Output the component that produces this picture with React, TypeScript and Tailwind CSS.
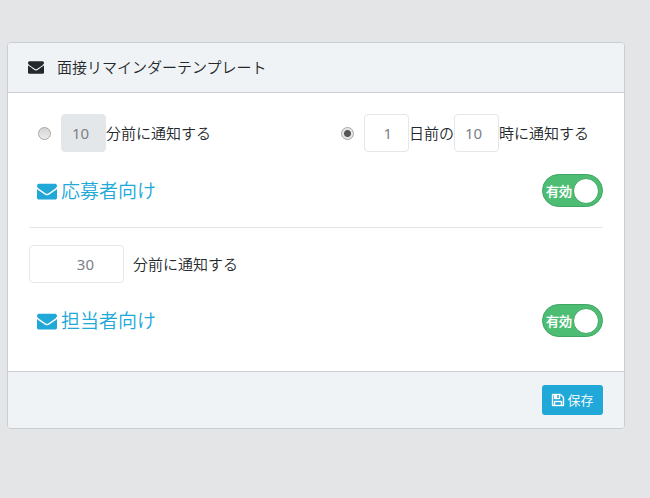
import { useState } from 'react';

function EnvelopeIcon({ className }: { className: string }) {
  return (
    <svg className={className} viewBox="0 0 1792 1792" fill="currentColor" aria-hidden="true">
      <path d="M1792 710v794q0 66-47 113t-113 47h-1472q-66 0-113-47t-47-113v-794q44 49 101 87 362 246 497 345 57 42 92.5 65.5t94.5 48 110 24.5h2q51 0 110-24.5t94.5-48 92.5-65.5q170-123 498-345 57-39 100-87zm0-294q0 79-49 151t-122 123q-376 261-468 325-10 7-42.5 31t-54 38.5-52 32.5-57.5 27-50 9h-2q-23 0-50-9t-57.5-27-52-32.5-54-38.5-42.5-31q-91-64-262-182.5t-205-142.5q-62-42-117-115.5t-55-136.5q0-78 41.5-130t118.5-52h1472q65 0 112.5 47t47.5 113z" />
    </svg>
  );
}

function SaveIcon() {
  return (
    <svg
      className="size-[14px]"
      viewBox="0 0 1792 1792"
      fill="currentColor"
      stroke="currentColor"
      strokeWidth={50}
      aria-hidden="true"
    >
      <path d="M512 1536h768v-384h-768v384zm896 0h128v-896q0-14-10-38.5t-20-34.5l-281-281q-10-10-34-20t-39-10v416q0 40-28 68t-68 28h-576q-40 0-68-28t-28-68v-416h-128v1280h128v-416q0-40 28-68t68-28h832q40 0 68 28t28 68v416zm-384-928v-320q0-13-9.5-22.5t-22.5-9.5h-192q-13 0-22.5 9.5t-9.5 22.5v320q0 13 9.5 22.5t22.5 9.5h192q13 0 22.5-9.5t9.5-22.5zm640 32v928q0 40-28 68t-68 28h-1344q-40 0-68-28t-28-68v-1344q0-40 28-68t68-28h928q40 0 88 20t76 48l280 280q28 28 48 76t20 88z" />
    </svg>
  );
}

const radioClass =
  'size-[13px] shrink-0 appearance-none rounded-full border border-[#a6a6a6] bg-[linear-gradient(#d4d4d4,#ececec)] checked:bg-[radial-gradient(circle,#555_3px,#e6e6e6_4px)]';
const inputClass =
  'h-[38px] rounded border border-[#e4e7ea] bg-white font-normal text-[#7b8085] outline-none disabled:bg-[#e4e7ea]';

function TemplateRow({ label }: { label: string }) {
  const [enabled, setEnabled] = useState(true);

  return (
    <div className="flex items-center justify-between pl-2">
      <a href="#" className="flex items-center gap-1 text-[19px] leading-6 text-[#20a8d8]">
        <EnvelopeIcon className="size-5" />
        {label}
      </a>
      <label className="flex h-[33px] w-[61px] items-center justify-between rounded-full border border-[#3ea662] bg-[#4dbd74] px-[3px] text-[13px] font-bold text-white">
        <input
          type="checkbox"
          className="sr-only"
          checked={enabled}
          onChange={(e) => setEnabled(e.target.checked)}
          aria-label={label}
        />
        <span>有効</span>
        <span className="size-[26px] rounded-full border border-[#3ea662] bg-white" />
      </label>
    </div>
  );
}

export default function App() {
  const [timing, setTiming] = useState('day');

  return (
    <div className="min-h-screen bg-[#e4e5e6] pt-[42px] pr-[25px] pl-[7px] font-['Noto_Sans','Noto_Sans_CJK_JP_DemiLight','Noto_Sans_CJK_JP',sans-serif] text-[15px] leading-[22px] font-[350] text-[#23282c]">
      <form
        className="overflow-hidden rounded border border-[#c8ced3] bg-white"
        onSubmit={(e) => e.preventDefault()}
      >
        <div className="flex items-center gap-[13px] border-b border-[#c8ced3] bg-[#f0f3f5] px-5 pt-[13px] pb-[14px]">
          <EnvelopeIcon className="size-4" />
          <h1>面接リマインダーテンプレート</h1>
        </div>

        <div className="px-[21px] pt-[21px] pb-[34px]">
          {/* Applicant reminder */}
          <div className="flex items-center justify-between pr-[14px] pl-[9px]">
            <div className="flex items-center gap-[10px]">
              <input
                type="radio"
                name="timing"
                className={radioClass}
                checked={timing === 'minute'}
                onChange={() => setTiming('minute')}
                aria-label="分前に通知する"
              />
              <div className="flex items-center">
                <input
                  type="text"
                  className={`${inputClass} w-[45px] pl-[10px]`}
                  defaultValue="10"
                  disabled={timing !== 'minute'}
                  aria-label="分"
                />
                <span>分前に通知する</span>
              </div>
            </div>
            <div className="flex items-center gap-[10px]">
              <input
                type="radio"
                name="timing"
                className={radioClass}
                checked={timing === 'day'}
                onChange={() => setTiming('day')}
                aria-label="日前の時に通知する"
              />
              <div className="flex items-center">
                <input
                  type="text"
                  className={`${inputClass} w-[45px] pr-4 text-right`}
                  defaultValue="1"
                  aria-label="日前"
                />
                <span>日前の</span>
                <input
                  type="text"
                  className={`${inputClass} w-[45px] pl-[10px]`}
                  defaultValue="10"
                  aria-label="時"
                />
                <span>時に通知する</span>
              </div>
            </div>
          </div>
          <div className="mt-[22px]">
            <TemplateRow label="応募者向け" />
          </div>

          <hr className="mt-5 mb-[17px] border-[#e4e5e6]" />

          {/* Staff reminder */}
          <div className="flex items-center gap-[9px]">
            <input
              id="staff-minutes"
              type="text"
              className={`${inputClass} w-[95px] pr-[29px] text-right`}
              defaultValue="30"
            />
            <label htmlFor="staff-minutes">分前に通知する</label>
          </div>
          <div className="mt-[21px]">
            <TemplateRow label="担当者向け" />
          </div>
        </div>

        <div className="flex justify-end border-t border-[#c8ced3] bg-[#f0f3f5] px-[21px] py-[13px]">
          <button
            type="submit"
            className="flex h-[30px] w-[61px] items-center justify-center gap-[2px] rounded-[3px] bg-[#20a8d8] text-[13px] font-normal text-white"
          >
            <SaveIcon />
            保存
          </button>
        </div>
      </form>
    </div>
  );
}
